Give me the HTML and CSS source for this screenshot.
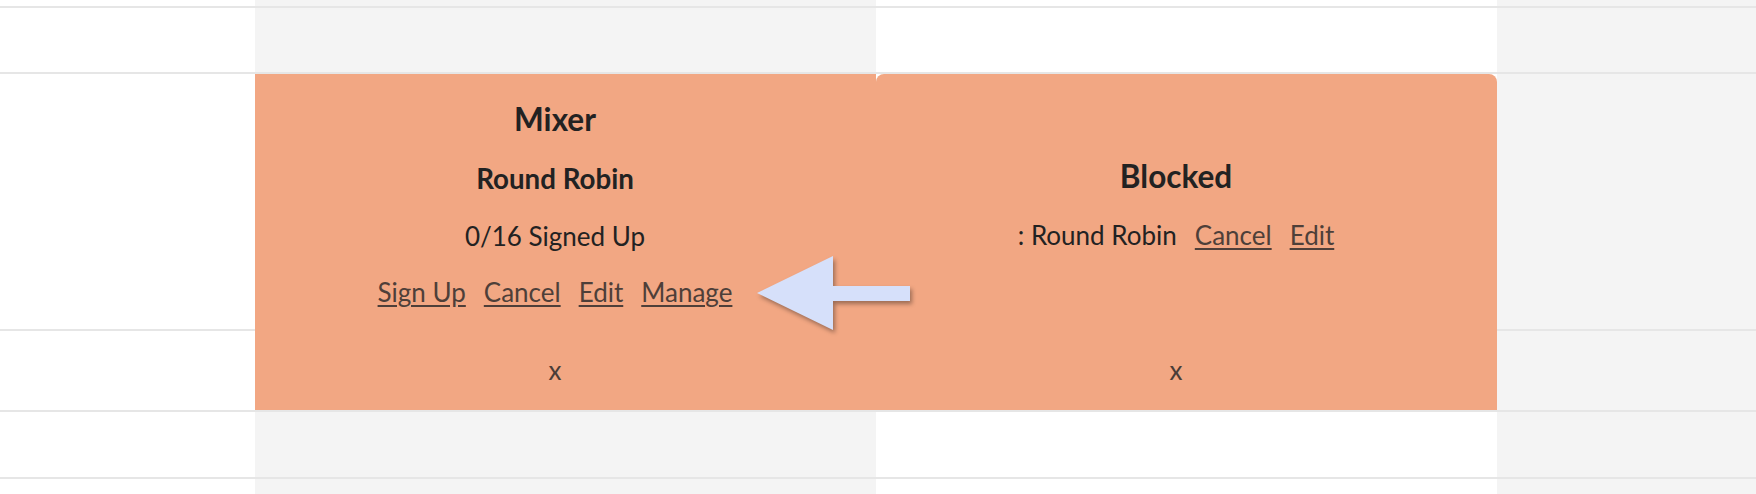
FILE: index.html
```html
<!DOCTYPE html>
<html lang="en">
<head>
  <meta charset="UTF-8" />
  <meta name="viewport" content="width=device-width, initial-scale=1.0" />
  <title>Schedule</title>
  <link rel="stylesheet" href="styles.css">
</head>
<body>
  <div class="schedule">
    <!-- column backgrounds -->
    <div class="col col-1"></div>
    <div class="col col-2"></div>
    <div class="col col-3"></div>
    <div class="col col-4"></div>

    <!-- row separators -->
    <div class="row-line row-2"></div>
    <div class="row-line row-3"></div>
    <div class="row-line row-4"></div>
    <div class="row-line row-5"></div>
    <div class="row-line row-6"></div>

    <!-- EVENT: Mixer -->
    <div class="event event-mixer">
      <div class="event-body">
        <div class="event-title">Mixer</div>
        <div class="event-line event-sub">Round Robin</div>
        <div class="event-line">0/16 Signed Up</div>
        <div class="event-line event-links">
          <a href="#">Sign Up</a>
          <a href="#">Cancel</a>
          <a href="#">Edit</a>
          <a href="#">Manage</a>
        </div>
      </div>
      <div class="event-close">x</div>
    </div>

    <!-- EVENT: Blocked -->
    <div class="event event-blocked">
      <div class="event-body">
        <div class="event-title">Blocked</div>
        <div class="event-line event-links">
          <span>: Round Robin</span>
          <a href="#">Cancel</a>
          <a href="#">Edit</a>
        </div>
      </div>
      <div class="event-close">x</div>
    </div>

    <!-- Hinweis-Pfeil -->
    <svg class="pointer" width="170" height="90" viewBox="0 0 170 90">
      <polygon points="7,43 83,6 83,36 160,36 160,51 83,51 83,80" />
    </svg>
  </div>
</body>
</html>
```

FILE: styles.css
```css
body {
  margin: 0;
  background: #fff;
  font-family: Lato, "Open Sans", sans-serif;
  color: #222;
}
.schedule {
  position: relative;
  height: 494px;
  overflow: hidden;
  display: grid;
  grid-template-columns: 255px 621px 621px 1fr;
  grid-template-rows: 6px 66px 257px 81px 67px 1fr;
}
.col {
  grid-row: 1 / -1;
}
.col-1 { grid-column: 1; background: #fff; }
.col-2 { grid-column: 2; background: #f4f4f4; }
.col-3 { grid-column: 3; background: #fff; }
.col-4 { grid-column: 4; background: #f4f4f4; }

.row-line {
  grid-column: 1 / -1;
  border-top: 2px solid #e6e6e6;
}
.row-2 { grid-row: 2; }
.row-3 { grid-row: 3; }
.row-4 { grid-row: 4; }
.row-5 { grid-row: 5; }
.row-6 { grid-row: 6; }

.event {
  grid-row: 3 / 5;
  margin-top: 2px;
  display: flex;
  flex-direction: column;
  padding-right: 21px;
  background: #f2a783;
  text-align: center;
  font-size: 26px;
}
.event-mixer { grid-column: 2; }
.event-blocked {
  grid-column: 3;
  border-radius: 8px 8px 0 0;
}
.event-body {
  flex: 1;
  display: flex;
  flex-direction: column;
  justify-content: center;
  padding-bottom: 8px;
}
.event-title {
  font-size: 31.5px;
  font-weight: bold;
  line-height: 62px;
}
.event-line {
  line-height: 56px;
}
.event-sub {
  font-size: 27.7px;
  font-weight: bold;
  line-height: 58px;
}
.event-links {
  display: flex;
  justify-content: center;
  gap: 18px;
}
.event-links a {
  color: #4e3f39;
  text-decoration: underline;
  text-underline-offset: 3px;
}
.event-close {
  line-height: 56px;
  margin-bottom: 12px;
  color: #4a3d38;
}
.pointer {
  position: absolute;
  left: 750px;
  top: 250px;
  fill: #d6e0fa;
  filter: drop-shadow(2px 3px 2px rgba(0,0,0,0.35));
}
```
